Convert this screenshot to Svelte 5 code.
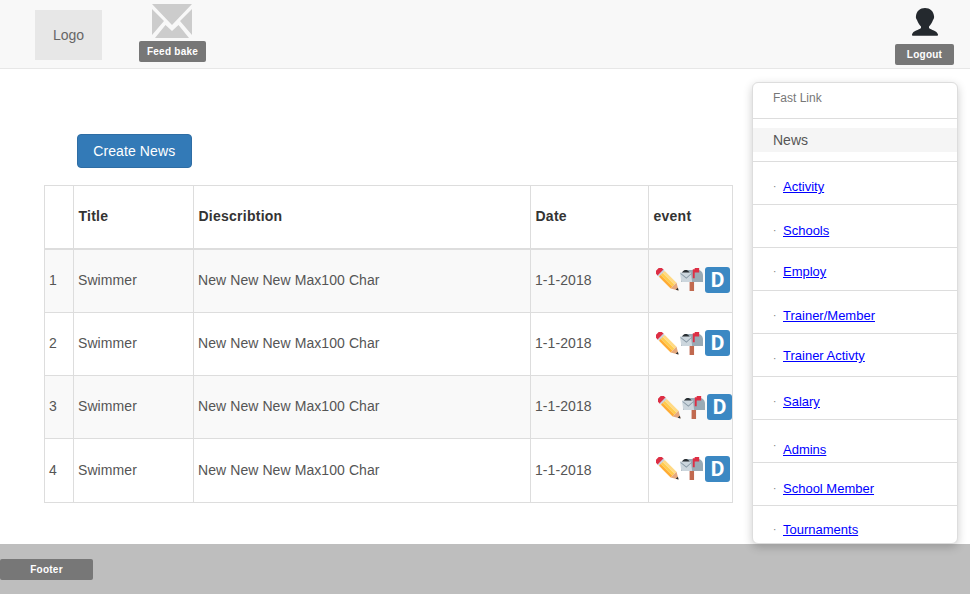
<script>
  const rows = [
    { n: 1, shift: 0, drop: 0 },
    { n: 2, shift: 0, drop: 0 },
    { n: 3, shift: 2, drop: 2 },
    { n: 4, shift: 0, drop: -2 }
  ];
  const links = [
    { label: 'Activity', top: 17, dot: 0 },
    { label: 'Schools', top: 18, dot: 0 },
    { label: 'Employ', top: 16, dot: 0 },
    { label: 'Trainer/Member', top: 17, dot: 0 },
    { label: 'Trainer Activty', top: 11, dot: 6 },
    { label: 'Salary', top: 17, dot: 0 },
    { label: 'Admins', top: 22, dot: -9 },
    { label: 'School Member', top: 18, dot: 0 },
    { label: 'Tournaments', top: 16, dot: 0 }
  ];
</script>

<div class="page">
  <header class="top">
    <div class="logo">Logo</div>
    <div class="feed">
      <svg class="mail" width="40" height="34" viewBox="0 0 40 34" aria-hidden="true">
        <path d="M0 0H40L20 21Z M0 5L12 17L0 31Z M40 5L28 17L40 31Z M3 34L13.500 21L20 27L26.500 21L37 34Z" fill="#ccc" />
      </svg>
      <span class="tag">Feed bake</span>
    </div>
    <div class="user">
      <svg width="28" height="28" viewBox="0 0 28 28" aria-hidden="true">
        <path d="M14 0C19 0 22.500 3 23 8C23.300 9 23 11 22 12C21 15 19.500 17 18 18.500V20C20 22 26 22.500 27 26.500C27.300 27.500 26.500 27.700 25.500 27.700H2.500C1.500 27.700 .7 27.500 1 26.500C2 22.500 8 22 10 20V18.500C8.500 17 7 15 6 12C5 11 4.700 9 5 8C5.500 3 9 0 14 0Z" fill="#24292e" />
      </svg>
      <span class="tag logout">Logout</span>
    </div>
  </header>

  <main class="body">
    <button class="create" type="button">Create News</button>
    <table>
      <thead>
        <tr>
          <th class="c1"></th>
          <th class="c2">Title</th>
          <th class="c3">Diescribtion</th>
          <th class="c4">Date</th>
          <th class="c5">event</th>
        </tr>
      </thead>
      <tbody>
        {#each rows as row}
          <tr>
            <td>{row.n}</td>
            <td>Swimmer</td>
            <td>New New New Max100 Char</td>
            <td>1-1-2018</td>
            <td class="events">
              <div class="icons" style={`margin:${row.drop}px 0 0 ${3 + row.shift}px`}>
                <svg width="23" height="23" viewBox="0 0 36 36" aria-hidden="true">
                  <g transform="translate(3.500 3.500) rotate(45)">
                    <rect x="-2" y="-6.500" width="10" height="13" rx="3" fill="#dd2e44" />
                    <rect x="5" y="-6.500" width="3" height="13" fill="#ccd6dd" />
                    <rect x="8" y="-6.500" width="26" height="4.500" fill="#ffd983" />
                    <rect x="8" y="-2" width="26" height="4.500" fill="#ffcc4d" />
                    <rect x="8" y="2.500" width="26" height="4" fill="#ffac33" />
                    <path d="M34 -6.500V6.500L45 0Z" fill="#e5a97e" />
                    <path d="M41 -2.400V2.400L45 0Z" fill="#292f33" />
                  </g>
                </svg>
                <svg class="box" width="23" height="23" viewBox="0 0 36 36" aria-hidden="true">
                  <path d="M15 21H22V36H15Z" fill="#c1694f" />
                  <path d="M9 3H28C33 3 36 7 36 12V22H9Z" fill="#99aab5" />
                  <path d="M9 3C5 3 2 7 2 12V22H16V12C16 7 13 3 9 3Z" fill="#292f33" />
                  <path d="M0 7H17L19 22H2Z" fill="#ccd6dd" />
                  <path d="M1 8L10 15 18 8V9.500L10 17 1 9.500Z" fill="#8899a6" />
                  <path d="M20 2H23V0H30V7H23V16H20Z" fill="#dd2e44" />
                </svg>
                <span class="letter">D</span>
              </div>
            </td>
          </tr>
        {/each}
      </tbody>
    </table>

    <aside class="side">
      <div class="title">Fast Link</div>
      <div class="active"><span>News</span></div>
      {#each links as link}
        <div class="item">
          <div class="inner" style={`padding-top:${link.top}px`}>
            <span class="dot" style={`margin-top:${link.dot}px`}>·</span>
            <a href="#top">{link.label}</a>
          </div>
        </div>
      {/each}
    </aside>
  </main>

  <footer class="foot">
    <span class="tag footer">Footer</span>
  </footer>
</div>

<style>
  :global(body) {
    margin: 0;
    font-family: "Liberation Sans", Arial, sans-serif;
  }
  .page {
    width: 970px;
    height: 594px;
    display: flex;
    flex-direction: column;
    overflow: hidden;
    color: #333;
    font-size: 14px;
  }
  .top {
    height: 68px;
    flex: none;
    display: flex;
    background: #f8f8f8;
    border-bottom: 1px solid #e7e7e7;
  }
  .logo {
    width: 67px;
    height: 50px;
    margin: 10px 0 0 35px;
    background: #e7e7e7;
    color: #666;
    display: flex;
    align-items: center;
    justify-content: center;
  }
  .feed {
    width: 67px;
    margin: 4px 0 0 37px;
    display: flex;
    flex-direction: column;
    align-items: center;
  }
  .mail {
    display: block;
    margin-right: 1px;
  }
  .tag {
    display: block;
    background: #777;
    color: #fff;
    font-size: 10px;
    font-weight: 700;
    letter-spacing: .25px;
    text-align: center;
    border-radius: 2px;
  }
  .feed .tag {
    width: 67px;
    height: 21px;
    line-height: 21px;
    margin-top: 3px;
  }
  .user {
    margin: 8px 16px 0 auto;
    width: 59px;
    display: flex;
    flex-direction: column;
    align-items: center;
  }
  .user svg {
    display: block;
    margin-left: 1px;
  }
  .logout {
    width: 59px;
    height: 21px;
    line-height: 21px;
    margin-top: 8px;
  }
  .body {
    flex: 1;
    position: relative;
    display: flex;
    flex-direction: column;
    background: #fff;
  }
  .create {
    align-self: flex-start;
    margin: 64.5px 0 0 76.5px;
    width: 115.500px;
    height: 34.500px;
    background: #337ab7;
    border: 1px solid #2e6da4;
    border-radius: 4px;
    color: #fff;
    font: 14px "Liberation Sans", Arial, sans-serif;
    letter-spacing: .1px;
    padding: 0;
  }
  table {
    width: 688px;
    margin: 17px 0 0 44px;
    border-collapse: collapse;
    table-layout: fixed;
  }
  th, td {
    box-sizing: border-box;
    border: 1px solid #ddd;
    padding: 4px 4px 6px;
    text-align: left;
    color: #555;
    vertical-align: middle;
    letter-spacing: .08px;
  }
  th {
    height: 63px;
    border-bottom-width: 2px;
    color: #333;
    letter-spacing: .25px;
    padding-left: 4.500px;
  }
  td {
    height: 63px;
  }
  tbody tr:nth-child(odd) {
    background: #f9f9f9;
  }
  tbody tr:first-child td,
  tbody tr:last-child td {
    height: 64px;
  }
  .c1 { width: 29px; }
  .c2 { width: 120px; }
  .c3 { width: 337px; }
  .c4 { width: 118px; }
  .c5 { width: 84px; }
  .icons {
    display: flex;
    align-items: center;
    white-space: nowrap;
  }
  .icons svg {
    flex: none;
    display: block;
  }
  .box {
    margin-left: 1px;
  }
  .letter {
    flex: none;
    width: 25px;
    height: 26px;
    margin-left: 2px;
    background: #3b88c3;
    border-radius: 3px;
    color: #fff;
    font: 700 21px/26px Roboto, sans-serif;
    text-align: center;
  }
  .side {
    position: absolute;
    left: 752px;
    top: 13px;
    width: 204px;
    height: 460px;
    overflow: hidden;
    background: #fff;
    border: 1px solid #ddd;
    border-radius: 6px;
    box-shadow: 0 3px 10px rgba(0, 0, 0, .2);
  }
  .title {
    height: 36px;
    padding: 8px 0 0 20px;
    box-sizing: border-box;
    color: #777;
    font-size: 12px;
    border-bottom: 1px solid #ddd;
  }
  .active {
    height: 43px;
    padding-top: 9px;
    box-sizing: border-box;
    border-bottom: 1px solid #ddd;
  }
  .active span {
    display: block;
    height: 24px;
    line-height: 24px;
    padding-left: 20px;
    background: #f5f5f5;
    color: #555;
  }
  .item {
    height: 43px;
    box-sizing: border-box;
    border-bottom: 1px solid #ddd;
  }
  .inner {
    display: flex;
    align-items: center;
    padding-left: 20px;
    font-size: 13px;
    line-height: 16px;
  }
  .dot {
    width: 10px;
    color: #777;
    font-size: 10px;
  }
  a {
    color: #0000ff;
    text-decoration: underline;
  }
  .foot {
    flex: none;
    height: 50px;
    background: #bebebe;
  }
  .footer {
    width: 93px;
    height: 21px;
    line-height: 21px;
    margin-top: 15px;
  }
</style>
